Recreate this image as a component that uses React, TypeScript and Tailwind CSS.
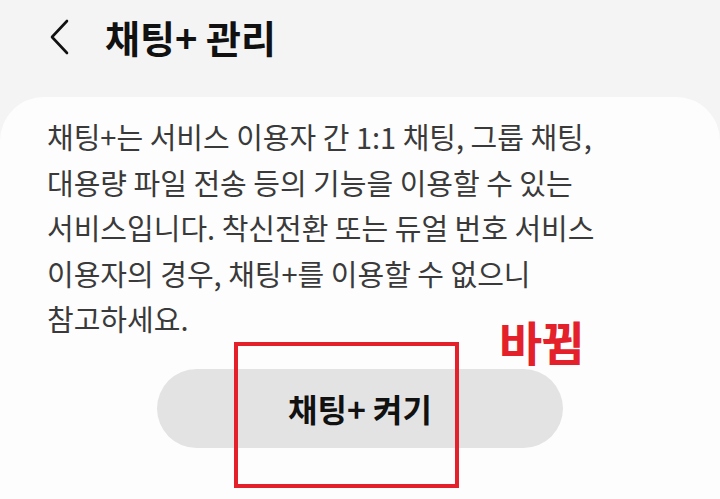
const lines = [
  '채팅+는 서비스 이용자 간 1:1 채팅, 그룹 채팅,',
  '대용량 파일 전송 등의 기능을 이용할 수 있는',
  '서비스입니다. 착신전환 또는 듀얼 번호 서비스',
  '이용자의 경우, 채팅+를 이용할 수 없으니',
  '참고하세요.',
]

export default function App() {
  return (
    <div
      className="flex h-[499px] w-[720px] flex-col overflow-hidden bg-[#f4f4f4]"
      style={{ fontFamily: '"Noto Sans CJK KR", "Noto Sans", sans-serif' }}
    >
      {/* Header */}
      <header className="flex h-[97px] items-start pt-[12px]">
        <button className="ml-[44px] flex h-[50px] w-[30px] items-center justify-center">
          <svg width="22" height="36" viewBox="0 0 22 36" fill="none">
            <path d="M19 2 L4 18 L19 34" stroke="#111" strokeWidth="2.6" strokeLinecap="round" strokeLinejoin="round" />
          </svg>
        </button>
        <h1 className="ml-[31px] text-[38px] font-bold leading-[50px] text-[#111]">채팅+ 관리</h1>
      </header>

      {/* Card */}
      <main className="flex-1 rounded-t-[44px] bg-[#fdfdfd] px-[47px] pt-[17px]">
        <p className="text-[29px] leading-[45.5px] text-[#3a3a3a]">
          {lines.map((l, i) => (
            <span key={i} className="block whitespace-nowrap">
              {l}
            </span>
          ))}
        </p>

        <div className="relative mt-[27px] flex justify-center">
          <button className="h-[79px] w-[406px] rounded-full bg-[#e3e3e3] text-[32px] font-bold text-[#111]">
            채팅+ 켜기
          </button>
          <div className="absolute left-[187px] top-[-27px] h-[146px] w-[225px] border-4 border-[#e4202a]" />
          <span className="absolute left-[452px] top-[-52px] text-[47px] font-bold leading-none tracking-[-1px] text-[#e4202a]">
            바뀜
          </span>
        </div>
      </main>
    </div>
  )
}
